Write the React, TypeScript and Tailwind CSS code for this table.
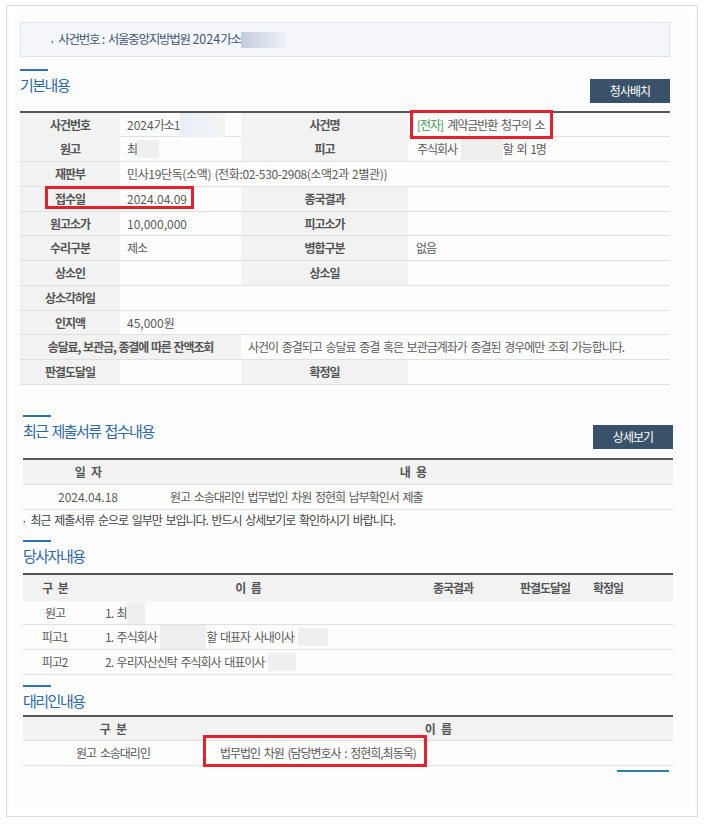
import React from "react";

function T({ s }: { s: string }) {
  const parts = s.split(/([0-9.,:\-]+)/);
  return (
    <>
      {parts.map((p, i) =>
        /^[0-9.,:\-]+$/.test(p) ? (
          <span key={i} className="tracking-[0em]">
            {p}
          </span>
        ) : (
          <React.Fragment key={i}>{p}</React.Fragment>
        )
      )}
    </>
  );
}

function SectionHead({ title, button }: { title: string; button?: string }) {
  return (
    <div>
      <div className="w-[28px] h-[2px] bg-[#2f6fb6]" />
      <div className="flex justify-between items-start">
        <div className="mt-[4px] h-[20px] leading-[20px] text-[15px] text-[#2b68ad] tracking-[-0.1em] [word-spacing:2px]">{title}</div>
        {button ? (
          <div className="mt-[8px] w-[80px] h-[24px] bg-[#3a5269] text-white text-[12px] flex items-center justify-center tracking-[-0.08em]">
            {button}
          </div>
        ) : null}
      </div>
    </div>
  );
}

const L = "bg-[#f2f2f2] flex items-center justify-center font-bold text-[#555] tracking-[-0.09em] [word-spacing:1px] whitespace-nowrap";
const V = "flex items-center pl-[7px] text-[#5a5a5a] tracking-[-0.085em] [word-spacing:2px] whitespace-nowrap";
const G = "grid grid-cols-[100px_121px_167px_262px] border-b border-[#e0e0e0]";
const H = "flex items-center justify-center whitespace-nowrap";
const HS = "[word-spacing:4px]";
const B = "text-[#5a5a5a] tracking-[-0.085em] [word-spacing:2px]";

export default function App() {
  return (
    <div className="w-[710px] h-[827px] bg-white pt-[5px] pl-[6px] font-['Noto_Sans_CJK_KR','Noto_Sans',sans-serif] text-[12px]">
      <div className="w-[692px] h-[812px] border border-[#dcdcdc] p-[7px]">
        <div className="h-full bg-[#fdfdfd]">
          {/* case box */}
          <div className="ml-[6px] pt-[9px]">
            <div className="w-[650px] h-[35px] border border-[#dfe3ea] bg-[#f5f7fa] flex items-center pl-[30px] text-[12.5px] text-[#3f5678] tracking-[-0.1em] [word-spacing:1px]">
              <span className="text-[9px] text-[#444] mr-[6px] -mt-[2px]">,</span>
              <span>
                <T s="사건번호 : 서울중앙지방법원 2024가소" />
              </span>
              <span className="inline-block w-[45px] h-[16px] bg-linear-to-r from-[#c3cbde] to-[#eff2f7]" />
            </div>
          </div>

          {/* 기본내용 */}
          <div className="ml-[6px] w-[650px] mt-[12px]">
            <SectionHead title="기본내용" button="청사배치" />
            <div className="mt-[8px] border-t-2 border-[#555] relative">
              <div className={`${G} h-[24px]`}>
                <div className={L}>사건번호</div>
                <div className={V}>
                  <T s="2024가소1" />
                  <span className="inline-block w-[45px] h-[24px] bg-linear-to-r from-[#e9eef5] to-[#f4f4f4]" />
                </div>
                <div className={L}>사건명</div>
                <div className={`${V} pl-[9px]`}>
                  <span className="text-[#3c9a4c]">[전자]</span>
                  <span className="ml-[4px]">계약금반환 청구의 소</span>
                </div>
              </div>
              <div className={`${G} h-[25px]`}>
                <div className={L}>원고</div>
                <div className={V}>
                  최<span className="inline-block w-[22px] h-[18px] bg-[#efefef]" />
                </div>
                <div className={L}>피고</div>
                <div className={`${V} pl-[9px]`}>
                  주식회사&nbsp;<span className="inline-block w-[42px] h-[22px] bg-[#eeeeee]" />
                  <span>할 외 1명</span>
                </div>
              </div>
              <div className={`grid grid-cols-[100px_550px] border-b border-[#e0e0e0] h-[25px]`}>
                <div className={L}>재판부</div>
                <div className="flex items-center pl-[7px] text-[#5a5a5a] tracking-[-0.03em] [word-spacing:1px] whitespace-nowrap">
                  민사19단독(소액) (전화:02-530-2908(소액2과 2별관))
                </div>
              </div>
              <div className={`${G} h-[25px]`}>
                <div className={L}>접수일</div>
                <div className={V}>
                  <T s="2024.04.09" />
                </div>
                <div className={L}>종국결과</div>
                <div className={V}></div>
              </div>
              <div className={`${G} h-[24px]`}>
                <div className={L}>원고소가</div>
                <div className={V}>
                  <T s="10,000,000" />
                </div>
                <div className={L}>피고소가</div>
                <div className={V}></div>
              </div>
              <div className={`${G} h-[25px]`}>
                <div className={L}>수리구분</div>
                <div className={V}>제소</div>
                <div className={L}>병합구분</div>
                <div className={`${V} pl-[8px]`}>없음</div>
              </div>
              <div className={`${G} h-[25px]`}>
                <div className={L}>상소인</div>
                <div className={V}></div>
                <div className={L}>상소일</div>
                <div className={V}></div>
              </div>
              <div className={`grid grid-cols-[100px_550px] border-b border-[#e0e0e0] h-[25px]`}>
                <div className={L}>상소각하일</div>
                <div className={V}></div>
              </div>
              <div className={`grid grid-cols-[100px_550px] border-b border-[#e0e0e0] h-[24px]`}>
                <div className={L}>인지액</div>
                <div className={V}>
                  <T s="45,000" />원
                </div>
              </div>
              <div className={`grid grid-cols-[221px_429px] border-b border-[#e0e0e0] h-[25px]`}>
                <div className={L}>송달료, 보관금, 종결에 따른 잔액조회</div>
                <div className={`${V} pl-[3px]`}>사건이 종결되고 송달료 종결 혹은 보관금계좌가 종결된 경우에만 조회 가능합니다.</div>
              </div>
              <div className={`${G} h-[25px]`}>
                <div className={L}>판결도달일</div>
                <div className={V}></div>
                <div className={L}>확정일</div>
                <div className={V}></div>
              </div>

              <div className="absolute left-[390px] -top-[3px] w-[143px] h-[29px] border-[3px] border-[#e5212b]" />
              <div className="absolute left-[25px] top-[73px] w-[149px] h-[23px] border-[3px] border-[#e5212b]" />
            </div>
          </div>

          {/* 최근 제출서류 접수내용 */}
          <div className="ml-[9px] w-[650px] mt-[30px]">
            <SectionHead title="최근 제출서류 접수내용" button="상세보기" />
            <div className="mt-[9px] border-t-2 border-[#555]">
              <div className="grid grid-cols-[130px_520px] h-[25px] bg-[#f2f2f2] border-b border-[#e0e0e0] font-bold text-[#555] tracking-[-0.06em]">
                <div className={`${H} ${HS}`}>일 자</div>
                <div className={`${H} ${HS}`}>내 용</div>
              </div>
              <div className={`grid grid-cols-[130px_520px] h-[25px] border-b border-[#e0e0e0] ${B}`}>
                <div className={H}>
                  <T s="2024.04.18" />
                </div>
                <div className="flex items-center pl-[17px] whitespace-nowrap">원고 소송대리인 법무법인 차원 정현희 납부확인서 제출</div>
              </div>
              <div className="h-[19px] flex items-center text-[#444] tracking-[-0.085em] [word-spacing:2px] whitespace-nowrap">
                <span className="text-[9px] mr-[6px] -mt-[2px]">,</span>
                <span>최근 제출서류 순으로 일부만 보입니다. 반드시 상세보기로 확인하시기 바랍니다.</span>
              </div>
            </div>
          </div>

          {/* 당사자내용 */}
          <div className="ml-[9px] w-[650px] mt-[11px]">
            <SectionHead title="당사자내용" />
            <div className="mt-[7px] border-t-2 border-[#555]">
              <div className="grid grid-cols-[64px_322px_88px_96px_30px_50px] h-[26px] bg-[#f2f2f2] font-bold text-[#555] tracking-[-0.09em]">
                <div className={`${H} ${HS}`}>구 분</div>
                <div className={`${H} ${HS}`}>이 름</div>
                <div className={H}>종국결과</div>
                <div className={H}>판결도달일</div>
                <div className={H}>확정일</div>
                <div />
              </div>
              <div className={`grid grid-cols-[64px_586px] h-[24px] border-b border-[#e0e0e0] ${B}`}>
                <div className={H}>원고</div>
                <div className="flex items-center pl-[18px] whitespace-nowrap">
                  <span>1. 최</span>
                  <span className="inline-block w-[18px] h-[22px] bg-[#efefef]" />
                </div>
              </div>
              <div className={`grid grid-cols-[64px_586px] h-[25px] border-b border-[#e0e0e0] ${B}`}>
                <div className={H}>
                  피고<T s="1" />
                </div>
                <div className="flex items-center pl-[18px] whitespace-nowrap">
                  <span>1. 주식회사&nbsp;</span>
                  <span className="inline-block w-[46px] h-[24px] bg-[#eeeeee]" />
                  <span>할 대표자 사내이사&nbsp;</span>
                  <span className="inline-block w-[30px] h-[18px] bg-[#efefef]" />
                </div>
              </div>
              <div className={`grid grid-cols-[64px_586px] h-[25px] border-b border-[#e0e0e0] ${B}`}>
                <div className={H}>
                  피고<T s="2" />
                </div>
                <div className="flex items-center pl-[18px] whitespace-nowrap">
                  <span>2. 우리자산신탁 주식회사 대표이사&nbsp;</span>
                  <span className="inline-block w-[28px] h-[18px] bg-[#efefef]" />
                </div>
              </div>
            </div>
          </div>

          {/* 대리인내용 */}
          <div className="ml-[9px] w-[650px] mt-[10px]">
            <SectionHead title="대리인내용" />
            <div className="mt-[4px] border-t-2 border-[#555] relative">
              <div className="grid grid-cols-[180px_470px] h-[24px] bg-[#f2f2f2] border-b border-[#e0e0e0] font-bold text-[#555] tracking-[-0.06em]">
                <div className={`${H} ${HS}`}>구 분</div>
                <div className={`${H} ${HS}`}>이 름</div>
              </div>
              <div className={`grid grid-cols-[180px_470px] h-[25px] border-b border-[#e0e0e0] ${B}`}>
                <div className={H}>원고 소송대리인</div>
                <div className="flex items-center pl-[17px] whitespace-nowrap">
                  <span>법무법인 차원 (담당변호사 : 정현희,최동욱)</span>
                </div>
              </div>
              <div className="absolute left-[180px] top-[18px] w-[224px] h-[32px] border-[3px] border-[#e5212b]" />
            </div>
            <div className="flex justify-end pr-[4px] mt-[4px]">
              <div className="w-[52px] h-[2px] bg-[#2f7f9c]" />
            </div>
          </div>
        </div>
      </div>
    </div>
  );
}
